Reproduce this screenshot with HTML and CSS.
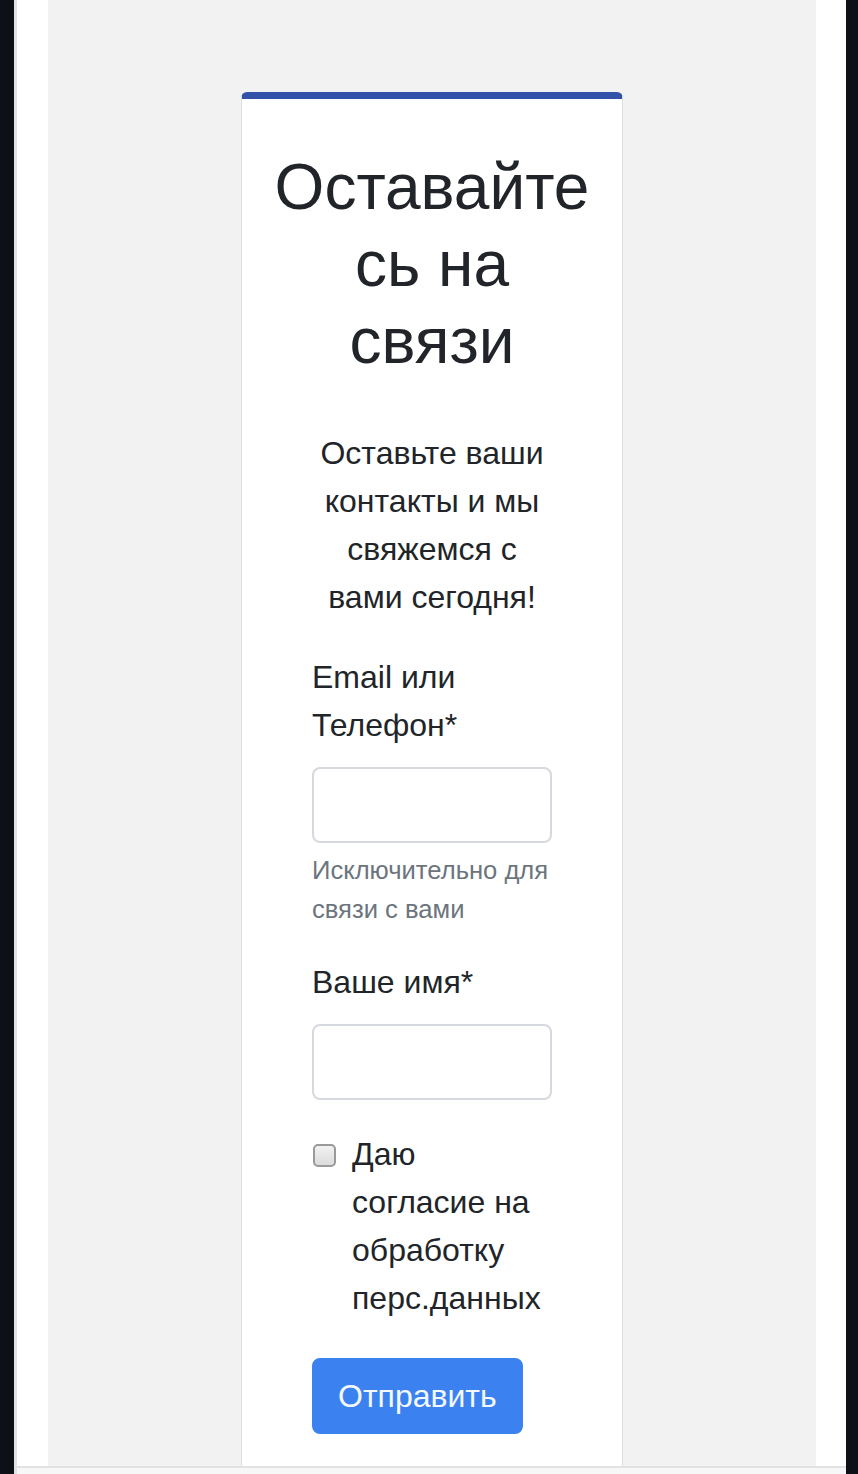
FILE: index.html
```html
<!DOCTYPE html>
<html lang="ru">
<head>
<meta charset="utf-8">
<title>Оставайтесь на связи</title>
<link rel="stylesheet" href="styles.css">
</head>
<body>
<div class="frame">
  <div class="viewport">
    <div class="stage">
      <div class="card">
        <h2 class="card-title">Оставайтесь на связи</h2>
        <div class="card-content">
          <p class="lead">Оставьте ваши контакты и мы свяжемся с вами сегодня!</p>
          <form class="form">
            <div class="form-group">
              <label class="label" for="contact">Email или Телефон*</label>
              <input class="control" id="contact" type="text">
              <small class="hint">Исключительно для связи с вами</small>
            </div>
            <div class="form-group">
              <label class="label" for="name">Ваше имя*</label>
              <input class="control" id="name" type="text">
            </div>
            <div class="form-check">
              <input class="check" id="agree" type="checkbox">
              <label class="check-label" for="agree">Даю согласие на обработку перс.данных</label>
            </div>
            <button class="btn" type="button">Отправить</button>
          </form>
        </div>
      </div>
    </div>
  </div>
</div>
</body>
</html>
```
FILE: styles.css
```css
* {
  box-sizing: border-box;
}

html, body {
  margin: 0;
  padding: 0;
}

body {
  background: #0d1117;
  font-family: "Liberation Sans", Arial, sans-serif;
  color: #212529;
  height: 1474px;
  overflow: hidden;
}

.frame {
  margin-left: 14px;
  width: 832px;
  height: 1474px;
  border-left: 3px solid #e3e3e3;
  background: #f7f7f7;
  overflow: hidden;
}

.viewport {
  background: #ffffff;
  padding: 0 30px 0 31px;
  border-bottom: 2px solid #e2e2e2;
}

.stage {
  background: #f2f2f2;
  height: 1466px;
  padding-top: 92px;
  overflow: hidden;
}

.card {
  width: 382px;
  margin: 0 auto;
  background: #ffffff;
  border: 1px solid #dedede;
  border-top: 7px solid #3152a8;
  border-radius: 6px 6px 0 0;
  padding: 50px 30px 200px;
}

.card-title {
  margin: 0 0 50px;
  font-size: 64px;
  line-height: 76.8px;
  font-weight: 400;
  text-align: center;
  overflow-wrap: break-word;
  color: #212529;
}

.card-content {
  padding: 0 40px;
}

.lead {
  margin: 0 0 32px;
  font-size: 32px;
  line-height: 48px;
  text-align: center;
}

.form {
  margin: 0;
}

.form-group {
  margin-bottom: 30px;
}

.label {
  display: block;
  font-size: 32px;
  line-height: 48px;
  margin-bottom: 18px;
}

.control {
  display: block;
  width: 100%;
  height: 76px;
  border: 2px solid #d6dae0;
  border-radius: 8px;
  background: #ffffff;
  font-size: 32px;
  padding: 12px 24px;
  font-family: inherit;
}

.hint {
  display: block;
  margin-top: 8px;
  font-size: 25.6px;
  line-height: 38.4px;
  color: #6c757d;
}

.form-check {
  display: flex;
  align-items: flex-start;
  padding-right: 6px;
  margin-bottom: 36px;
}

.check {
  appearance: none;
  -webkit-appearance: none;
  flex: none;
  width: 23px;
  height: 23px;
  margin: 14px 16px 0 1px;
  border: 2px solid #9a9a9a;
  border-radius: 5px;
  background: linear-gradient(#f2f2f2, #dcdcdc);
}

.check-label {
  font-size: 32px;
  line-height: 48px;
}

.btn {
  display: inline-block;
  background: #3b82f0;
  color: #f4f8ff;
  border: 2px solid #3b82f0;
  border-radius: 8px;
  padding: 12px 24px;
  font-family: inherit;
  font-size: 32px;
  line-height: 48px;
}
```
